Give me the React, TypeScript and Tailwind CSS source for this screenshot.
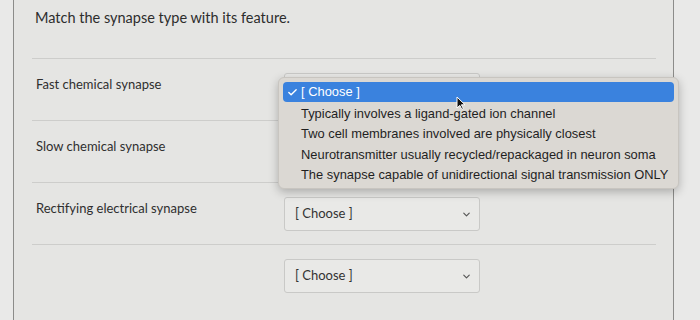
import { Check, ChevronDown } from "lucide-react";

const rows = [
    "Fast chemical synapse",
    "Slow chemical synapse",
    "Rectifying electrical synapse",
    "",
];

const options = [
    "Typically involves a ligand-gated ion channel",
    "Two cell membranes involved are physically closest",
    "Neurotransmitter usually recycled/repackaged in neuron soma",
    "The synapse capable of unidirectional signal transmission ONLY",
];

function SelectBox({ hidden }: { hidden?: boolean }) {
    return (
        <div className="flex h-[34px] w-[196px] items-center justify-between rounded-[3px] border border-[#c9c9c7] bg-[#e9e9e7] pl-[10px] pr-[7px]">
            {/* the menu covers the first two, so their text stays out of view */}
            {!hidden && <span className="text-[13px] text-[#333]">[ Choose ]</span>}
            <ChevronDown className="ml-auto h-[11px] w-[11px] text-[#555]" strokeWidth={2.5} />
        </div>
    );
}

export default function App() {
    return (
        <div
            className="relative flex h-[320px] w-[700px] overflow-hidden bg-[#e7e7e5]"
            style={{ fontFamily: "Lato, 'Open Sans', sans-serif" }}
        >
            {/* left gutter */}
            <div className="w-[13px] shrink-0 bg-[#e9e9e8]" />
            <div className="w-px shrink-0 bg-[#8c8c8a]" />

            {/* question body */}
            <div className="flex w-[659px] shrink-0 flex-col bg-[#e5e5e3]">
                <div className="h-[44px] pl-[21px] pt-[7px] text-[14.5px] text-[#2d2d2d]">
                    Match the synapse type with its feature.
                </div>
                <div className="ml-[18px] mr-[17px] mt-[14px] h-px bg-[#cdcdcb]" />

                {rows.map((label, i) => (
                    <div key={i}>
                        <div className="flex h-[61px] pt-[14px]">
                            <div className="w-[270px] shrink-0 pl-[22px] pt-[2px] text-[13px] text-[#2f2f2f]">
                                {label}
                            </div>
                            <SelectBox hidden={i < 2} />
                        </div>
                        {i < rows.length - 1 && <div className="ml-[18px] mr-[17px] h-px bg-[#cdcdcb]" />}
                    </div>
                ))}
            </div>

            <div className="w-px shrink-0 bg-[#8c8c8a]" />
            <div className="flex-1 bg-[#e9e9e8]" />

            {/* open dropdown menu */}
            <div
                className="absolute left-[278px] top-[77px] w-[401px] rounded-[6px] border border-[#c8c5c0] bg-[#dbd8d3] px-[4px] pb-[3px] pt-[4px] shadow-[0_3px_10px_rgba(0,0,0,0.25)]"
                style={{ fontFamily: "'Liberation Sans', Arial, sans-serif" }}
            >
                <div className="relative flex h-[20px] items-center rounded-[4px] bg-[#3a82de] pl-[4px] text-[12.9px] text-white">
                    <Check className="h-[11px] w-[11px]" strokeWidth={3} />
                    <span className="ml-[3px]">[ Choose ]</span>
                    {/* mouse pointer */}
                    <svg className="absolute left-[173px] top-[14px]" width="10" height="14" viewBox="0 0 10 14">
                        <path d="M1 1 L1 12 L3.8 9.4 L5.8 13.4 L7.4 12.6 L5.4 8.8 L9 8.8 Z" fill="#111" stroke="#fff" strokeWidth="1" />
                    </svg>
                </div>
                <div className="mt-[1px]">
                    {options.map((o) => (
                        <div key={o} className="flex h-[20.5px] items-center pl-[18px] text-[12.9px] text-[#1f1f1f]">
                            {o}
                        </div>
                    ))}
                </div>
            </div>
        </div>
    );
}
